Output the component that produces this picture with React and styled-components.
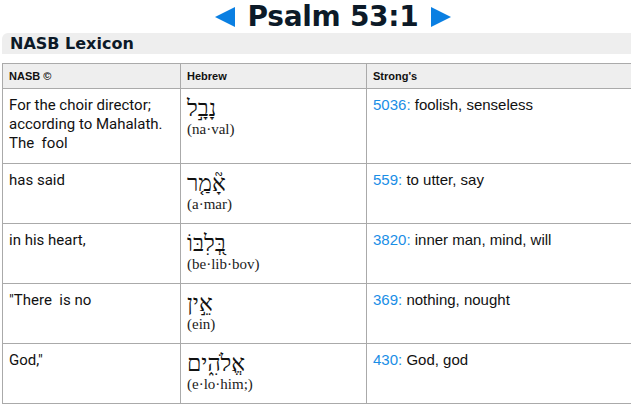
import React from 'react';
import styled, { createGlobalStyle } from 'styled-components';

const GlobalStyle = createGlobalStyle`
  html, body {
    margin: 0;
    padding: 0;
    background: #fff;
    overflow: hidden;
  }
  body {
    font-family: "Liberation Sans", Arial, sans-serif;
    color: #111;
  }
`;

const Page = styled.div`
  width: 662px;
  padding-left: 2px;
`;

const TitleRow = styled.div`
  height: 33px;
  display: flex;
  align-items: center;
  justify-content: center;
  gap: 13px;
`;

const Arrow = styled.span`
  width: 0;
  height: 0;
  border-top: 10px solid transparent;
  border-bottom: 10px solid transparent;
  ${(p) => (p.$dir === 'left' ? 'border-right' : 'border-left')}: 20px solid #0a7fe2;
  margin-top: 1px;
`;

const Title = styled.h1`
  margin: 0;
  font-family: "DejaVu Sans", Verdana, sans-serif;
  font-weight: bold;
  font-size: 28px;
  line-height: 33px;
  color: #0c1a28;
  letter-spacing: -0.3px;
`;

const SectionBar = styled.div`
  height: 21px;
  background: #eeeeee;
  border-top-left-radius: 6px;
  padding-left: 8px;
  display: flex;
  align-items: center;
  font-family: "DejaVu Sans", Verdana, sans-serif;
  font-weight: bold;
  font-size: 16px;
  color: #0c1a28;
`;

const Table = styled.table`
  margin-top: 9px;
  width: 100%;
  border-collapse: collapse;
  table-layout: fixed;
`;

const HeadCell = styled.th`
  background: #eeeeee;
  border: 1px solid #aaaaaa;
  height: 24px;
  padding: 0 6px;
  text-align: left;
  font-family: "Liberation Sans", Arial, sans-serif;
  font-weight: bold;
  font-size: 11px;
  color: #111;
  width: ${(p) => p.$w || 'auto'};
`;

const Cell = styled.td`
  border: 1px solid #aaaaaa;
  padding: 6px 6px 10px 6px;
  vertical-align: top;
`;

const EnglishText = styled.div`
  font-family: Roboto, "Liberation Sans", sans-serif;
  font-size: 15px;
  line-height: 19px;
  color: #111;
  padding-top: 1px;
`;

const HebrewWord = styled.div`
  font-family: "Liberation Serif", "DejaVu Serif", "DejaVu Sans", serif;
  font-size: 23px;
  line-height: 25px;
  color: #111;
  padding-top: 1px;
`;

const Translit = styled.div`
  font-family: "Liberation Serif", "Times New Roman", serif;
  font-size: 15px;
  line-height: 17px;
  color: #222;
`;

const StrongsText = styled.div`
  font-family: "Liberation Sans", Arial, sans-serif;
  font-size: 15px;
  line-height: 19px;
  color: #111;
`;

const StrongsNum = styled.span`
  color: #1a8ee6;
`;

const rows = [
  {
    english: ['For the choir director;', 'according to Mahalath.', 'The  fool'],
    hebrew: 'נָבָ֣ל',
    translit: '(na·val)',
    num: '5036',
    def: 'foolish, senseless',
  },
  {
    english: ['has said'],
    hebrew: 'אָ֘מַ֤ר',
    translit: '(a·mar)',
    num: '559',
    def: 'to utter, say',
  },
  {
    english: ['in his heart,'],
    hebrew: 'בְּ֭לִבּוֹ',
    translit: '(be·lib·bov)',
    num: '3820',
    def: 'inner man, mind, will',
  },
  {
    english: ['"There  is no'],
    hebrew: 'אֵ֣ין',
    translit: '(ein)',
    num: '369',
    def: 'nothing, nought',
  },
  {
    english: ['God,"'],
    hebrew: 'אֱלֹהִ֑ים',
    translit: '(e·lo·him;)',
    num: '430',
    def: 'God, god',
  },
];

export default function App() {
  return (
    <>
      <GlobalStyle />
      <Page>
        <TitleRow>
          <Arrow $dir="left" />
          <Title>Psalm 53:1</Title>
          <Arrow $dir="right" />
        </TitleRow>
        <SectionBar>NASB Lexicon</SectionBar>
        <Table>
          <thead>
            <tr>
              <HeadCell $w="165px">NASB ©</HeadCell>
              <HeadCell $w="173px">Hebrew</HeadCell>
              <HeadCell>Strong's</HeadCell>
            </tr>
          </thead>
          <tbody>
            {rows.map((r) => (
              <tr key={r.num}>
                <Cell>
                  <EnglishText>
                    {r.english.map((line, i) => (
                      <div key={i} style={{ whiteSpace: 'pre' }}>{line}</div>
                    ))}
                  </EnglishText>
                </Cell>
                <Cell>
                  <HebrewWord>
                    <span lang="he" dir="rtl">{r.hebrew}</span>
                  </HebrewWord>
                  <Translit>{r.translit}</Translit>
                </Cell>
                <Cell>
                  <StrongsText>
                    <StrongsNum>{r.num}:</StrongsNum> {r.def}
                  </StrongsText>
                </Cell>
              </tr>
            ))}
          </tbody>
        </Table>
      </Page>
    </>
  );
}
